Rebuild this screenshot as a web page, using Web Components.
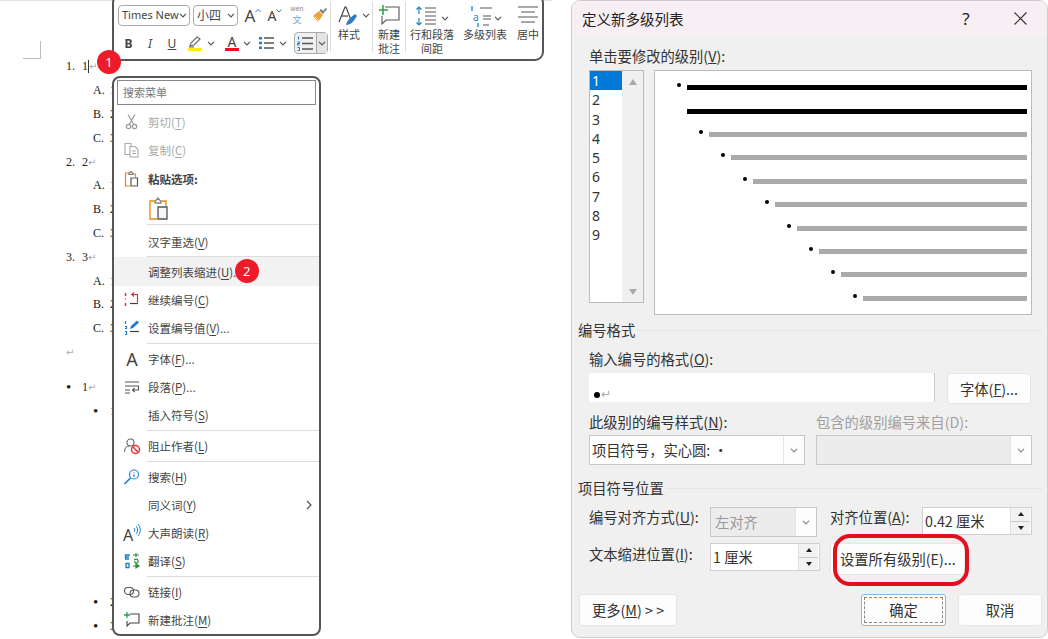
<!DOCTYPE html>
<html lang="zh">
<head>
<meta charset="utf-8">
<title>定义新多级列表</title>
<style>
    html, body { margin: 0; height: 100%; background: #fff; overflow: hidden; }
    body { font-family: "Noto Sans CJK SC", "Noto Sans", sans-serif; }
    .app { display: flex; width: 1048px; height: 639px; }
    svg { display: block; }
</style>
</head>
<body>
<div class="app">
    <wd-doc>
        <wd-line marker="1." caret>1</wd-line>
        <wd-line level="2" marker="A.">1</wd-line>
        <wd-line level="2" marker="B.">2</wd-line>
        <wd-line level="2" marker="C.">3</wd-line>
        <wd-line marker="2.">2</wd-line>
        <wd-line level="2" marker="A.">1</wd-line>
        <wd-line level="2" marker="B.">2</wd-line>
        <wd-line level="2" marker="C.">3</wd-line>
        <wd-line marker="3.">3</wd-line>
        <wd-line level="2" marker="A.">1</wd-line>
        <wd-line level="2" marker="B.">2</wd-line>
        <wd-line level="2" marker="C.">3</wd-line>
        <wd-line plain></wd-line>
        <wd-line marker="•" style="margin-top:11px">1</wd-line>
        <wd-line level="2" marker="•">1</wd-line>
        <wd-line level="2" marker="•" style="margin-top:168px">2</wd-line>
        <wd-line level="2" marker="•">3</wd-line>

        <wd-toolbar slot="over"></wd-toolbar>
        <wd-menu slot="over">
            <wd-item disabled label="剪切(<u>T</u>)">
                <svg slot="icon" width="18" height="18" viewBox="0 0 18 18" fill="none" stroke="#999" stroke-width="1.2"><path d="M5 1.5 10.5 11M12 1.5 6.5 11"/><circle cx="5.5" cy="13.5" r="2.2"/><circle cx="11.5" cy="13.5" r="2.2"/></svg>
            </wd-item>
            <wd-item disabled label="复制(<u>C</u>)">
                <svg slot="icon" width="18" height="18" viewBox="0 0 18 18" fill="#fff" stroke="#aaa" stroke-width="1.1"><path d="M2 2.5h6v11H2z"/><path d="M7 5.5h5l3 3v7.500H7z"/><path d="M9 10h4M9 12.500h4"/></svg>
            </wd-item>
            <wd-item strong label="粘贴选项:" style="margin-top:1px">
                <svg slot="icon" width="18" height="18" viewBox="0 0 18 18" fill="none" stroke-width="1.2"><path d="M6 3H2.500v13H7" stroke="#e8890c"/><path d="M6 3.500 8 1.500l2 2v1H6z" stroke="#777"/><path d="M10 4h2.500v3" stroke="#e8890c"/><path d="M8 8h6.500v8H8z" stroke="#555"/></svg>
            </wd-item>
            <wd-item tall>
                <svg slot="text" width="24" height="24" viewBox="0 0 24 24" fill="none" stroke-width="1.3"><path d="M7 5H2v18h7" stroke="#e8890c"/><path d="M7 5.500 10 2l3 3.500V7H7z" stroke="#888"/><path d="M13 5h5v5" stroke="#e8890c"/><path d="M10 11h9v12h-9z" stroke="#555" fill="#f6f6f6"/></svg>
            </wd-item>
            <wd-sep style="margin-bottom:3px"></wd-sep>
            <wd-item label="汉字重选(<u>V</u>)"></wd-item>
            <wd-sep style="margin-top:0;margin-bottom:0"></wd-sep>
            <wd-item hover label="调整列表缩进(<u>U</u>)..." style="height:29px">
                <wd-badge slot="after" style="left:-9px;top:-1px">2</wd-badge>
            </wd-item>
            <wd-item label="继续编号(<u>C</u>)">
                <svg slot="icon" width="18" height="18" viewBox="0 0 18 18" fill="none"><path d="M7 12.500h8" stroke="#444" stroke-width="1.200"/><path d="M8 3.500h6.500v8M11 1.500 9 3.500l2 2" stroke="#d9333f" stroke-width="1.200"/><path d="M2.500 2v3M2.500 7.500v1M2.500 12v3" stroke="#d9333f" stroke-width="1.500"/></svg>
            </wd-item>
            <wd-item label="设置编号值(<u>V</u>)...">
                <svg slot="icon" width="18" height="18" viewBox="0 0 18 18" fill="none"><path d="M7 12.500h9" stroke="#444" stroke-width="1.200"/><path d="M7 10 8 7l6-5.500 2 2L10 9z" fill="#1a7fd4"/><path d="M2.500 2v3M2 7.500h1.500v2H2M2 12.500h1.500v3H2" stroke="#1a7fd4" stroke-width="1.200"/></svg>
            </wd-item>
            <wd-sep></wd-sep>
            <wd-item label="字体(<u>F</u>)...">
                <span slot="icon" class="ic-a" style="font:18px 'Noto Sans',sans-serif;color:#444;line-height:18px">A</span>
            </wd-item>
            <wd-item label="段落(<u>P</u>)...">
                <svg slot="icon" width="18" height="18" viewBox="0 0 18 18" fill="none" stroke="#555" stroke-width="1.100"><path d="M2 4h14M2 8h14M2 12h5M2 15h5"/><path d="M15.500 8v4H9.500M11.500 10l-2 2 2 2"/></svg>
            </wd-item>
            <wd-item label="插入符号(<u>S</u>)"></wd-item>
            <wd-sep></wd-sep>
            <wd-item label="阻止作者(<u>L</u>)">
                <svg slot="icon" width="18" height="18" viewBox="0 0 18 18" fill="none"><circle cx="7.500" cy="5.500" r="3.500" stroke="#666" stroke-width="1.100"/><path d="M1.500 15c0-4 2.500-6 5-6" stroke="#666" stroke-width="1.100"/><circle cx="12.500" cy="12.500" r="4" stroke="#e0303c" stroke-width="1.500" fill="#fff"/><path d="M10 10l5 5" stroke="#e0303c" stroke-width="1.500"/></svg>
            </wd-item>
            <wd-sep></wd-sep>
            <wd-item label="搜索(<u>H</u>)">
                <svg slot="icon" width="18" height="18" viewBox="0 0 18 18" fill="none" stroke="#1a86d0"><circle cx="11" cy="6.500" r="4.500" stroke-width="1.200"/><path d="M7.500 10 1.500 16" stroke-width="1.700"/><path d="M11 4.500v.8M11 6.500v2.500" stroke="#555" stroke-width="1.100"/></svg>
            </wd-item>
            <wd-item label="同义词(<u>Y</u>)" arrow></wd-item>
            <wd-item label="大声朗读(<u>R</u>)">
                <span slot="icon" style="display:flex;align-items:flex-start">
                    <span style="font:16px/18px 'Noto Sans',sans-serif;color:#444;margin-top:3px">A</span>
                    <svg width="8" height="14" viewBox="0 0 8 14" fill="none" stroke="#1a86d0" stroke-width="1"><path d="M1 5c1 1 1 3 0 4M3 3c2 2 2 6 0 8M5 1c3 3 3 9 0 12"/></svg>
                </span>
            </wd-item>
            <wd-item label="翻译(<u>S</u>)">
                <svg slot="icon" width="18" height="18" viewBox="0 0 18 18" fill="none"><path d="M7 3H2.500v4H6M2 5h4" stroke="#1a7fd4" stroke-width="1.300"/><path d="M3 11.500h3v4H3zM6 11l0 5" stroke="#1a7fd4" stroke-width="1.300"/><path d="M10 3h6M13 1v4M11 8c3-2 5 0 4 2s-4 1-3-1" stroke="#2b8a3e" stroke-width="1.200"/><path d="M10 14h6M13 12l3 2-3 2z" stroke="#2b8a3e" stroke-width="1.200"/></svg>
            </wd-item>
            <wd-sep></wd-sep>
            <wd-item label="链接(<u>I</u>)">
                <svg slot="icon" width="18" height="18" viewBox="0 0 18 18" fill="none" stroke="#555" stroke-width="1.100"><rect x="1.500" y="4.500" width="9" height="7" rx="3.500"/><rect x="7" y="7" width="9" height="7" rx="3.500"/></svg>
            </wd-item>
            <wd-item label="新建批注(<u>M</u>)">
                <svg slot="icon" width="18" height="18" viewBox="0 0 18 18" fill="none"><path d="M7 3h9v9H7l-3 3v-5" stroke="#444" stroke-width="1.100"/><path d="M4 1v6M1 4h6" stroke="#2e9e48" stroke-width="1.300"/></svg>
            </wd-item>
        </wd-menu>
        <wd-badge slot="over" style="position:absolute;left:97px;top:50px">1</wd-badge>
    </wd-doc>

    <ml-dialog heading="定义新多级列表">
        <ml-label>单击要修改的级别(<u>V</u>):</ml-label>
        <div style="display:flex;gap:10px;align-items:flex-start;margin-top:4px">
            <ml-levels></ml-levels>
            <ml-preview></ml-preview>
        </div>

        <ml-section style="margin-top:5px">编号格式</ml-section>
        <ml-label style="margin-top:9px">输入编号的格式(<u>O</u>):</ml-label>
        <div style="display:flex;gap:12px;margin-top:4px;align-items:flex-start">
            <ml-format></ml-format>
            <ml-button style="width:84px;height:31px">字体(<u>F</u>)...</ml-button>
        </div>
        <div style="display:grid;grid-template-columns:216px 216px;column-gap:11px;margin-top:8px">
            <ml-label>此级别的编号样式(<u>N</u>):</ml-label>
            <ml-label disabled>包含的级别编号来自(D):</ml-label>
            <ml-select style="height:30px;margin-top:3px">项目符号，实心圆: •</ml-select>
            <ml-select disabled style="height:30px;margin-top:3px"></ml-select>
        </div>

        <ml-section style="margin-top:13px">项目符号位置</ml-section>
        <div style="display:grid;grid-template-columns:121px 120px 92px 110px;margin-top:9px;row-gap:6px;align-items:start">
            <ml-label>编号对齐方式(<u>U</u>):</ml-label>
            <ml-select disabled style="height:30px;width:107px">左对齐</ml-select>
            <ml-label>对齐位置(<u>A</u>):</ml-label>
            <ml-spin>0.42 厘米</ml-spin>
            <ml-label style="margin-top:1px">文本缩进位置(<u>I</u>):</ml-label>
            <ml-spin style="width:110px">1 厘米</ml-spin>
            <ml-button ringed style="grid-column:3/5;width:135px;height:32px;justify-content:flex-start;padding-left:9px;box-sizing:border-box">设置所有级别(E)...</ml-button>
        </div>

        <div slot="footer" style="display:flex;justify-content:space-between;align-items:flex-start">
            <ml-button style="width:98px;height:32px">更多(<u>M</u>) &gt; &gt;</ml-button>
            <div style="display:flex;gap:12px">
                <ml-button primary style="width:85px;height:32px">确定</ml-button>
                <ml-button style="width:84px;height:32px">取消</ml-button>
            </div>
        </div>
    </ml-dialog>
</div>

<script>
const CJK = `"Noto Sans CJK SC", "Noto Sans", sans-serif`
const chevron = (color = '#555') => `<svg width="8" height="5" viewBox="0 0 8 5" fill="none" stroke="${color}" stroke-width="1.200"><path d="M1 .8l3 3 3-3"/></svg>`

class Base extends HTMLElement {
    constructor() {
        super()
        this.attachShadow({ mode: 'open' })
    }
    connectedCallback() {
        this.shadowRoot.innerHTML = this.render()
    }
}

class WdDoc extends Base {
    render() {
        return `<style>
            :host { display: block; position: relative; width: 571px; height: 639px; flex: none; overflow: hidden; }
            .page { padding-top: 55px; }
            .corner { position: absolute; left: 23px; top: 41px; width: 17px; height: 17px; border-right: 1px solid #bbb; border-bottom: 1px solid #bbb; }
            .top { position: absolute; left: 0; top: 0; width: 552px; height: 1px; background: #e4e4e4; }
        </style>
        <div class="top"></div>
        <div class="corner"></div>
        <div class="page"><slot></slot></div>
        <slot name="over"></slot>`
    }
}

class WdLine extends Base {
    render() {
        const level = this.getAttribute('level') || '1'
        const bullet = this.getAttribute('marker') === '•'
        const marker = this.getAttribute('marker') || ''
        return `<style>
            :host { display: flex; align-items: center; height: 23.800px; padding-left: ${level === '2' ? 93 : 66}px; font: 12px "Liberation Serif", serif; color: #222; }
            .marker { width: ${level === '2' ? 17 : 16}px; font-size: ${bullet ? 15 : 12}px; flex: none; }
            .caret { width: 1px; height: 13px; background: #333; }
            .ret { font: 10px "DejaVu Sans", sans-serif; color: #aaa; }
        </style>
        ${this.hasAttribute('plain') ? '' : `<span class="marker">${marker}</span>`}
        <slot></slot>${this.hasAttribute('caret') ? '<span class="caret"></span>' : ''}<span class="ret">↵</span>`
    }
}

class WdBadge extends Base {
    render() {
        return `<style>
            :host { display: flex; align-items: center; justify-content: center; width: 24px; height: 24px; border-radius: 50%; background: #ed1c2a; color: #fff; font: 13px "Noto Sans", sans-serif; position: relative; flex: none; }
        </style><slot></slot>`
    }
}

class WdToolbar extends Base {
    render() {
        const btn = (html, w = 22, extra = '') => `<span class="btn" style="width:${w}px;${extra}">${html}</span>`
        return `<style>
            :host { position: absolute; left: 112px; top: -6px; width: 432px; height: 67px; display: flex; box-sizing: border-box; background: #fff; border: 2px solid #555; border-radius: 9px; font: 11px/14px ${CJK}; color: #444; padding: 8px 0 0 4px; }
            .left { width: 209px; flex: none; display: flex; flex-direction: column; gap: 6px; }
            .row { display: flex; align-items: center; height: 22px; }
            .combo { display: flex; align-items: center; justify-content: space-between; height: 21px; padding: 0 2px 0 3px; border: 1px solid #aaa; border-radius: 4px; box-sizing: border-box; white-space: nowrap; margin-right: 3px; font-size: 12px; flex: none; }
            .btn { display: flex; align-items: center; justify-content: center; height: 22px; flex: none; }
            .num { display: flex; width: 34px; height: 22px; border: 1px solid #aaa; border-radius: 4px; box-sizing: border-box; background: #f0f0f0; margin-left: 7px; flex: none; }
            .num i { display: flex; align-items: center; justify-content: center; width: 22px; }
            .num b { display: flex; align-items: center; justify-content: center; width: 11px; border-left: 1px solid #aaa; background: #e4e4e4; }
            .sep { width: 1px; height: 50px; background: #ddd; flex: none; margin-top: -2px; }
            .group { display: flex; flex-direction: column; align-items: center; flex: none; text-align: center; }
            .group > svg { height: 22px; margin-bottom: 1px; }
            .pad { height: 23px; display: flex; align-items: center; }
            .pen { display: flex; flex-direction: column; align-items: center; font: 15px/15px "Noto Sans", sans-serif; }
            .bar { width: 14px; height: 3px; }
            .wen { display: flex; flex-direction: column; align-items: center; color: #6aa5cf; margin-top: 1px; }
            .wen .a { font: 7px/8px "Liberation Sans", sans-serif; color: #888; }
            .wen .b { font-size: 9px; line-height: 13px; }
        </style>
        <div class="left">
            <div class="row">
                <span class="combo" style="width:72px;font-size:11px;font-family:'Noto Sans',sans-serif"><span>Times New</span>${chevron()}</span>
                <span class="combo" style="width:45px"><span>小四</span>${chevron()}</span>
                <span style="width:3px"></span>
                ${btn(`<span style="font:17px 'Noto Sans',sans-serif">A</span><svg width="6" height="10" viewBox="0 0 6 10" fill="none" stroke="#2b7cc4" style="margin-bottom:5px"><path d="M.5 4 3 1.500 5.500 4"/></svg>`, 24)}
                ${btn(`<span style="font:14px 'Noto Sans',sans-serif">A</span><svg width="6" height="10" viewBox="0 0 6 10" fill="none" stroke="#2b7cc4" style="margin-bottom:5px"><path d="M.5 1.500 3 4 5.500 1.500"/></svg>`, 20)}
                ${btn(`<span class="wen"><span class="a">wén</span><span class="b">文</span></span>`, 24)}
                ${btn(`<svg width="16" height="16" viewBox="0 0 16 16"><path d="M1 9 7 4l4 4-5 7z" fill="#f0a23a"/><path d="M3 10l4 4" stroke="#fff" stroke-width=".8"/><path d="M7.500 3.500 11 7l1.500-1.500-3.500-3.500z" fill="#777"/><path d="M11 3.500 14 1l1 1-2.500 3z" fill="#777"/></svg>`, 22)}
            </div>
            <div class="row">
                ${btn(`<b style="font:bold 12px 'Noto Sans',sans-serif">B</b>`, 21)}
                ${btn(`<i style="font:italic 12px 'Noto Sans',sans-serif">I</i>`, 22)}
                ${btn(`<u style="font:12px 'Noto Sans',sans-serif;text-decoration:underline">U</u>`, 22)}
                ${btn(`<span class="pen"><svg width="14" height="12" viewBox="0 0 14 12" fill="none" stroke="#666" stroke-width="1.100"><path d="M2 10 3 7l6-6 3 2-6 6z"/><path d="M1 11h5"/></svg><span class="bar" style="background:#ffec00"></span></span>`, 24)}
                ${btn(chevron(), 8)}
                ${btn(`<span class="pen"><span style="line-height:13px;font-size:14px">A</span><span class="bar" style="background:#e81123"></span></span>`, 34)}
                ${btn(chevron(), 8, 'margin-left:-6px')}
                ${btn(`<svg width="16" height="14" viewBox="0 0 16 14" fill="none"><path d="M5 2h10M5 7h10M5 12h10" stroke="#555" stroke-width="1.300"/><path d="M0 1h3v2.500H0zM0 5.700h3v2.500H0zM0 10.500h3V13H0z" fill="#1a7fd4"/></svg>`, 32)}
                ${btn(chevron(), 8, 'margin-left:-4px')}
                <span class="num"><i><svg width="17" height="15" viewBox="0 0 17 15" fill="none"><path d="M5 2h11M5 7.500h11M5 13h11" stroke="#555" stroke-width="1.300"/><path d="M1.500 .5v3M.5 6h2v1.500h-2v1.500h2M.5 11.500h2v3h-2" stroke="#1a7fd4"/></svg></i><b>${chevron()}</b></span>
            </div>
        </div>
        <span class="sep" style="margin-left:3px"></span>
        <div class="group" style="width:41px;align-items:flex-start;padding-left:7px;box-sizing:border-box">
            <div style="display:flex;align-items:center;height:23px"><svg width="24" height="22" viewBox="0 0 24 22" fill="none"><path d="M1 17 7 2h1l5 13" stroke="#444" stroke-width="1.200"/><path d="M4 11h6" stroke="#444" stroke-width="1.200"/><path d="M8 20c1-5 4-7 9-11l2 2c-3 5-6 9-11 9z" fill="#2b7cc4"/></svg>${chevron()}</div>
            <span>样式</span>
        </div>
        <span class="sep"></span>
        <div class="group" style="width:32px">
            <svg width="22" height="22" viewBox="0 0 22 22" fill="none"><path d="M7 3h14v13H8l-4 4v-8" stroke="#555" stroke-width="1.100"/><path d="M5 1v10M1 6h9" stroke="#2e9e48" stroke-width="1.500"/></svg>
            <span>新建<br>批注</span>
        </div>
        <span class="sep"></span>
        <div class="group" style="width:52px">
            <div class="pad"><svg width="24" height="22" viewBox="0 0 24 22" fill="none"><path d="M3 9V2M.5 4.500 3 2l2.500 2.500M3 13v7M.5 17.500 3 20l2.500-2.500" stroke="#1a86d0" stroke-width="1.200"/><path d="M9 3h11M9 7h11M9 11h11M9 15h11M9 19h11" stroke="#555" stroke-width="1.200"/></svg><span style="margin-left:1px">${chevron()}</span></div>
            <span>行和段落<br>间距</span>
        </div>
        <div class="group" style="width:54px">
            <div class="pad"><svg width="26" height="22" viewBox="0 0 26 22" fill="none"><path d="M4 1v5" stroke="#1a86d0" stroke-width="1.300"/><text x="5" y="16" font-size="10" font-family="Noto Sans" fill="#1a86d0">a</text><path d="M10 18v4" stroke="#1a86d0" stroke-width="1.300"/><path d="M12 3h12M15 11h8M15 14h8M15 20h6" stroke="#555" stroke-width="1.200"/></svg><span>${chevron()}</span></div>
            <span>多级列表</span>
        </div>
        <div class="group" style="width:32px">
            <svg width="22" height="22" viewBox="0 0 22 22" fill="none" stroke="#555" stroke-width="1.200"><path d="M1 3h20M4 8h14M1 13h20M4 18h14"/></svg>
            <span>居中</span>
        </div>`
    }
}

class WdMenu extends Base {
    render() {
        return `<style>
            :host { position: absolute; left: 112px; top: 76px; width: 209px; height: 560px; box-sizing: border-box; background: #fff; border: 2px solid #555; border-radius: 8px; padding: 2px 3px 0 3px; font: 11.500px/16px ${CJK}; color: #444; }
            .search { height: 25px; box-sizing: border-box; border: 1px solid #888; padding: 3px 5px 0; color: #777; margin-right: 0; font-size: 11px; margin-bottom: 3px; }
            .list { margin: 0 -3px 0 -3px; }
        </style>
        <div class="search">搜索菜单</div>
        <div class="list"><slot></slot></div>`
    }
}

class WdItem extends Base {
    render() {
        const label = this.getAttribute('label') || ''
        const disabled = this.hasAttribute('disabled')
        const strong = this.hasAttribute('strong')
        const tall = this.hasAttribute('tall')
        return `<style>
            :host { display: flex; align-items: center; height: ${tall ? 30 : 28}px; position: relative; background: ${this.hasAttribute('hover') ? '#f2f2f2' : 'transparent'}; color: ${disabled ? '#aaa' : '#444'}; font-weight: ${strong ? 700 : 400}; }
            .icon { width: 18px; height: 18px; margin-left: 9px; margin-right: 7px; flex: none; display: flex; align-items: center; justify-content: center; }
            .text { display: flex; align-items: center; }
            .after { margin-left: 1px; display: flex; }
            .arrow { margin-left: auto; margin-right: 7px; }
            u { text-underline-offset: 2px; }
        </style>
        <span class="icon"><slot name="icon"></slot></span>
        <span class="text">${label}<slot name="text"></slot></span>
        <span class="after"><slot name="after"></slot></span>
        ${this.hasAttribute('arrow') ? '<svg class="arrow" width="6" height="10" viewBox="0 0 6 10" fill="none" stroke="#555" stroke-width="1.200"><path d="M1 1l4 4-4 4"/></svg>' : ''}`
    }
}

class WdSep extends Base {
    render() {
        return `<style>
            :host { display: block; height: 1px; background: #dcdcdc; margin: 1px 0 1px 33px; }
        </style>`
    }
}

class MlDialog extends Base {
    render() {
        return `<style>
            :host { display: flex; flex-direction: column; width: 477px; height: 638px; flex: none; box-sizing: border-box; background: #f0f0f0; border: 1px solid #ccc; border-radius: 9px; overflow: hidden; font: 14.300px/20px ${CJK}; color: #333; }
            header { display: flex; align-items: center; height: 35px; flex: none; background: #f8eff4; padding-left: 10px; font-size: 14.500px; color: #222; }
            header .title { flex: 1; }
            header .q { width: 20px; font: 17px "Noto Sans", sans-serif; margin-right: 38px; text-align: center; }
            .x { margin-right: 20px; }
            .body { padding: 10px 14px 0 17px; display: flex; flex-direction: column; }
            footer { margin-top: 19px; padding: 0 5px 0 7px; }
        </style>
        <header><span class="title">${this.getAttribute('heading')}</span><span class="q">?</span>
            <svg class="x" width="13" height="13" viewBox="0 0 13 13" stroke="#333" stroke-width="1.200"><path d="M.5.5l12 12M12.500.5l-12 12"/></svg>
        </header>
        <div class="body"><slot></slot></div>
        <footer><slot name="footer"></slot></footer>`
    }
}

class MlLabel extends Base {
    render() {
        return `<style>
            :host { display: block; height: 20px; white-space: nowrap; color: ${this.hasAttribute('disabled') ? '#a0a0a0' : 'inherit'}; }
        </style><slot></slot>`
    }
}

class MlSection extends Base {
    render() {
        return `<style>
            :host { display: flex; align-items: center; height: 20px; margin-left: -11px; margin-right: -9px; gap: 2px; }
            i { flex: 1; height: 1px; background: #e4e4e4; }
        </style><slot></slot><i></i>`
    }
}

class MlLevels extends Base {
    render() {
        const rows = [1, 2, 3, 4, 5, 6, 7, 8, 9].map(n => `<div class="row${n === 1 ? ' on' : ''}">${n}</div>`).join('')
        return `<style>
            :host { display: flex; width: 55px; height: 233px; flex: none; box-sizing: border-box; background: #fff; border: 1px solid #bbb; font: 14px/19.300px "Noto Sans", sans-serif; color: #333; }
            .rows { width: 32px; flex: none; }
            .row { padding-left: 2px; height: 19.300px; }
            .on { background: #0078d7; color: #fff; }
            .bar { flex: 1; display: flex; flex-direction: column; justify-content: space-between; align-items: center; padding: 8px 0 7px; background: #f0f0f0; }
            .up, .down { width: 0; height: 0; border-left: 4px solid transparent; border-right: 4px solid transparent; }
            .up { border-bottom: 6px solid #aaa; }
            .down { border-top: 6px solid #aaa; }
        </style>
        <div class="rows">${rows}</div>
        <div class="bar"><span class="up"></span><span class="down"></span></div>`
    }
}

class MlPreview extends Base {
    render() {
        const rows = [[0, true, true], [0, false, true]]
        for (let i = 0; i < 8; i++) rows.push([22 + i * 22, true, false])
        const html = rows.map(([indent, bullet, active]) => `
            <div class="row" style="padding-left:${indent}px">
                <i class="dot" style="visibility:${bullet ? 'visible' : 'hidden'}"></i>
                <i class="bar ${active ? 'on' : ''}"></i>
            </div>`).join('')
        return `<style>
            :host { display: block; width: 378px; height: 245px; flex: none; box-sizing: border-box; background: #fff; border: 1px solid #bbb; padding: 5px 4px 0 22px; }
            .row { display: flex; align-items: center; height: 23.400px; gap: 6px; }
            .dot { width: 4px; height: 4px; border-radius: 50%; background: #000; margin-top: -5px; flex: none; }
            .bar { flex: 1; height: 5px; background: #aaa; }
            .on { background: #000; }
        </style>${html}`
    }
}

class MlFormat extends Base {
    render() {
        return `<style>
            :host { display: flex; align-items: flex-end; width: 346px; height: 29px; flex: none; box-sizing: border-box; background: #fff; border-right: 1px solid #ccc; padding: 0 0 1px 5px; }
            i { width: 6px; height: 6px; border-radius: 50%; background: #000; margin-bottom: 3px; }
            span { font: 12px/13px "DejaVu Sans", sans-serif; color: #aaa; margin-left: 1px; }
        </style><i></i><span>↵</span>`
    }
}

class MlButton extends Base {
    render() {
        const ring = this.hasAttribute('ringed') ? '<i class="ring"></i>' : ''
        const primary = this.hasAttribute('primary')
        return `<style>
            :host { display: flex; align-items: center; justify-content: center; position: relative; background: #fdfdfd; border: 1px solid #e6e6e6; border-radius: 3px; box-sizing: border-box; white-space: nowrap; color: #333; ${primary ? 'border: 1.500px solid #7db8e8;' : ''} }
            .focus { position: absolute; inset: 2px; border: 1px dashed #888; }
            .ring { position: absolute; left: 2px; top: -10px; width: 136px; height: 52px; box-sizing: border-box; border: 4px solid #e2101e; border-radius: 17px; }
        </style>${primary ? '<i class="focus"></i>' : ''}<slot></slot>${ring}`
    }
}

class MlSelect extends Base {
    render() {
        const disabled = this.hasAttribute('disabled')
        return `<style>
            :host { display: flex; align-items: center; box-sizing: border-box; background: ${disabled ? '#ececec' : '#fff'}; border: 1px solid #c8c8c8; color: ${disabled ? '#999' : '#333'}; padding-left: 2px; white-space: nowrap; }
            .t { flex: 1; padding-left: ${disabled ? 2 : 0}px; }
            .b { display: flex; align-items: center; justify-content: center; width: 20px; height: 100%; background: #fdfdfd; border-left: 1px solid #e4e4e4; }
        </style><span class="t"><slot></slot></span><span class="b">${chevron('#888')}</span>`
    }
}

class MlSpin extends Base {
    render() {
        return `<style>
            :host { display: flex; align-items: center; height: 28px; box-sizing: border-box; background: #fff; border: 1px solid #d0d0d0; padding-left: 2px; }
            .t { flex: 1; }
            .b { display: flex; flex-direction: column; width: 19px; height: 100%; border-left: 1px solid #ddd; margin-right: 1px; }
            .b span { flex: 1; display: flex; align-items: center; justify-content: center; background: #f2f2f2; }
            .b span + span { border-top: 1px solid #ccc; }
            .up, .down { width: 0; height: 0; border-left: 3.500px solid transparent; border-right: 3.500px solid transparent; }
            .up { border-bottom: 4px solid #222; }
            .down { border-top: 4px solid #222; }
        </style><span class="t"><slot></slot></span><span class="b"><span><i class="up"></i></span><span><i class="down"></i></span></span>`
    }
}

customElements.define('wd-doc', WdDoc)
customElements.define('wd-line', WdLine)
customElements.define('wd-badge', WdBadge)
customElements.define('wd-toolbar', WdToolbar)
customElements.define('wd-menu', WdMenu)
customElements.define('wd-item', WdItem)
customElements.define('wd-sep', WdSep)
customElements.define('ml-dialog', MlDialog)
customElements.define('ml-label', MlLabel)
customElements.define('ml-section', MlSection)
customElements.define('ml-levels', MlLevels)
customElements.define('ml-preview', MlPreview)
customElements.define('ml-format', MlFormat)
customElements.define('ml-button', MlButton)
customElements.define('ml-select', MlSelect)
customElements.define('ml-spin', MlSpin)
</script>
</body>
</html>
